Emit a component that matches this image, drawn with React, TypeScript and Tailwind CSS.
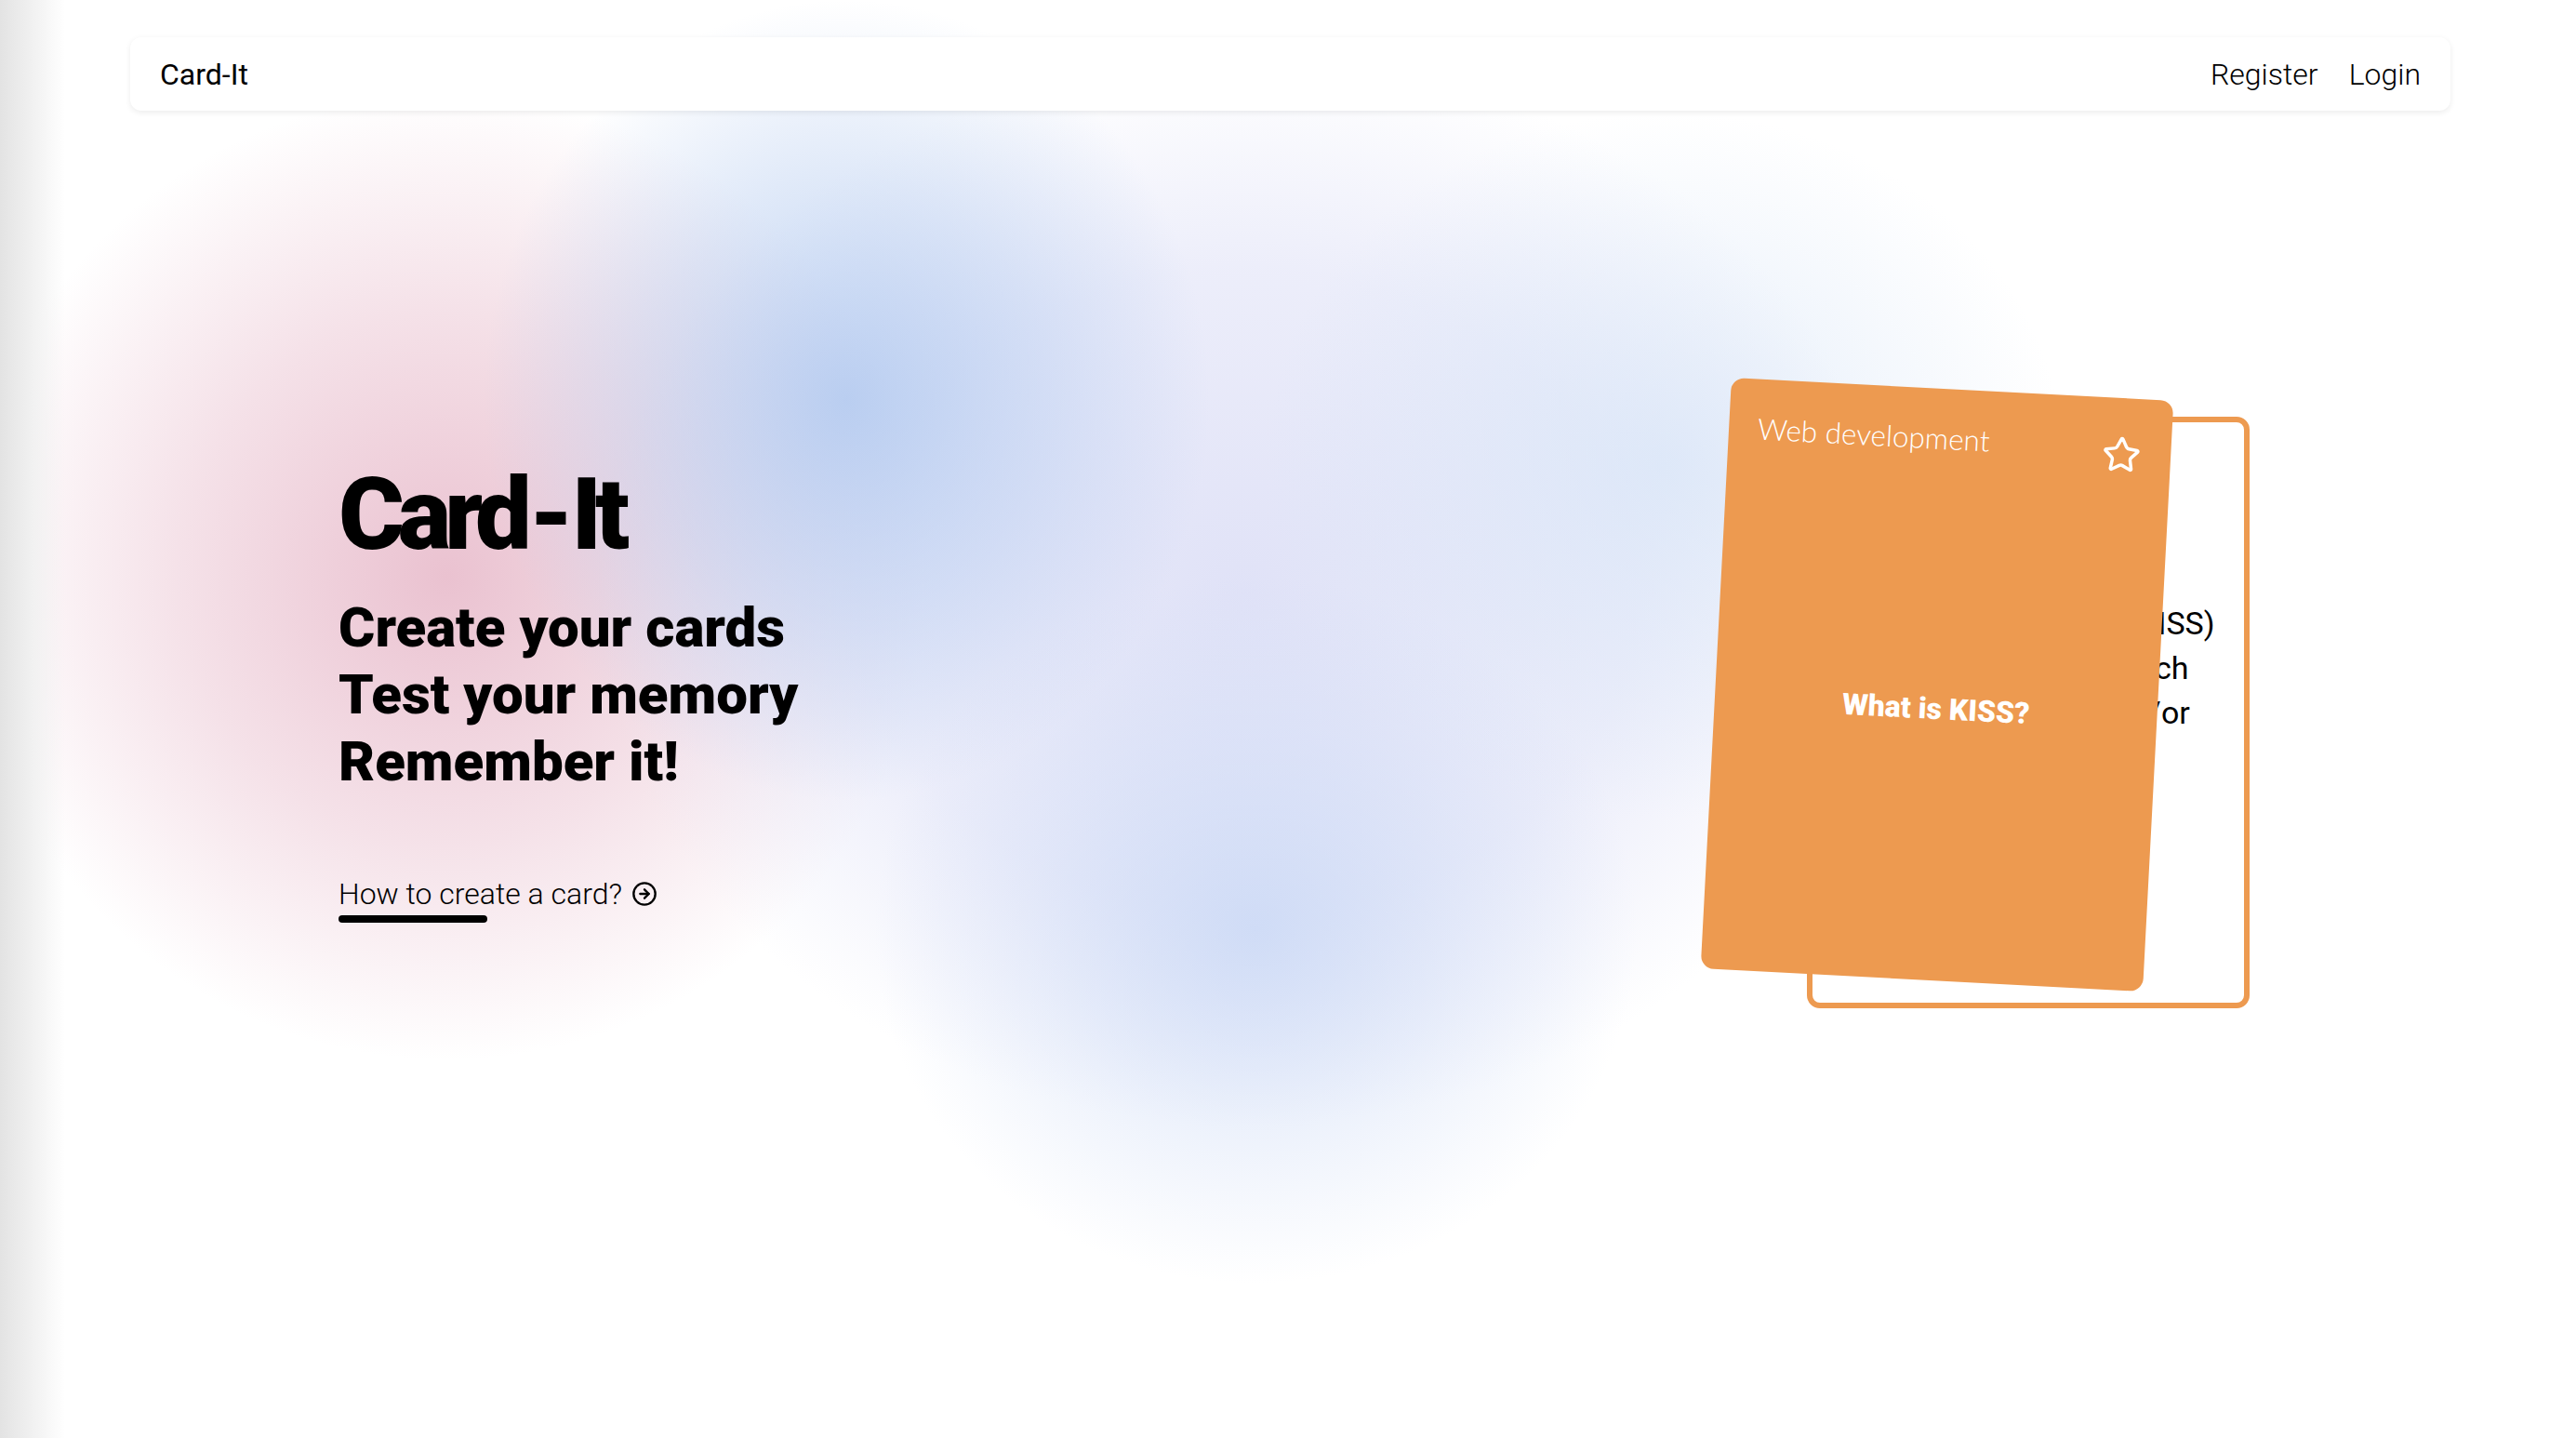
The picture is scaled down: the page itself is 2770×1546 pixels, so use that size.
import { CircleArrowRight, Star } from 'lucide-react'

const orange = 'bg-[#ed9a50]'

function Blobs() {
  return (
    <div className="pointer-events-none absolute inset-0">
      <div className="absolute left-[-40px] top-[100px] h-[1040px] w-[1040px] rounded-full bg-[radial-gradient(closest-side,rgba(226,170,190,0.72),rgba(226,170,190,0.35)_55%,rgba(226,170,190,0))]" />
      <div className="absolute left-[640px] top-[60px] h-[1150px] w-[1400px] rounded-full bg-[radial-gradient(closest-side,rgba(224,226,247,1),rgba(224,226,247,0.6)_60%,rgba(224,226,247,0))]" />
      <div className="absolute left-[520px] top-[0px] h-[860px] w-[780px] rounded-full bg-[radial-gradient(closest-side,rgba(176,200,239,0.85),rgba(176,200,239,0.4)_55%,rgba(176,200,239,0))]" />
      <div className="absolute left-[940px] top-[620px] h-[760px] w-[820px] rounded-full bg-[radial-gradient(closest-side,rgba(200,215,245,0.8),rgba(200,215,245,0.3)_60%,rgba(200,215,245,0))]" />
      <div className="absolute left-[1360px] top-[120px] h-[760px] w-[860px] rounded-full bg-[radial-gradient(closest-side,rgba(214,228,247,0.7),rgba(214,228,247,0))]" />
      <div className="absolute left-0 top-0 h-full w-[70px] bg-gradient-to-r from-[#e3e3e3] via-[#f1f1f1] to-transparent" />
    </div>
  )
}

function CardStack() {
  return (
    <div className="relative h-[636px] w-[476px]">
      <div className="flex h-full w-full items-center justify-center rounded-[14px] border-[6px] border-[#ed9a50] bg-white pr-[24px]">
        <p className="text-left font-['Roboto',sans-serif] text-[34px] leading-[48px] text-black">
          <span className="block">Keep it simple, stupid (KISS)</span>
          <span className="block">is a design principle which</span>
          <span className="block">states that designs and/or</span>
          <span className="block">systems should be as</span>
          <span className="block">simple as possible.</span>
        </p>
      </div>

      <div
        className={`absolute inset-0 flex translate-x-[-98px] translate-y-[-30px] rotate-[3deg] flex-col rounded-[14px] pb-[30px] ${orange}`}
      >
        <div className="flex items-start justify-between pl-[31px] pr-[32px] pt-[32px]">
          <span className="font-['Lato',sans-serif] text-[31.5px] font-light leading-[42px] text-white">
            Web development
          </span>
          <Star size={42} strokeWidth={2} className="mt-[8px] text-white" />
        </div>
        <div className="flex flex-1 items-center justify-center">
          <span className="font-['Roboto',sans-serif] text-[32px] font-black text-white">What is KISS?</span>
        </div>
      </div>
    </div>
  )
}

export default function App() {
  return (
    <div className="relative min-h-screen w-full overflow-hidden bg-white font-['Roboto',sans-serif] text-black">
      <Blobs />

      <div className="relative">
        <header className="pl-[140px] pr-[135px] pt-[40px]">
          <nav className="flex h-[79px] items-center justify-between rounded-[12px] bg-white px-[32px] shadow-[0_2px_6px_rgba(0,0,0,0.08)]">
            <a href="#" className="text-[32px] leading-none">
              Card-It
            </a>
            <div className="flex items-center gap-[33px] text-[32px] font-light leading-none">
              <a href="#">Register</a>
              <a href="#">Login</a>
            </div>
          </nav>
        </header>

        <main className="flex items-start justify-between pl-[364px] pr-[351px]">
          <section className="mt-[380px]">
            <h1 className="text-[108px] font-black leading-none tracking-[-0.065em]">
              Card<span className="mx-[4px]">-</span>It
            </h1>
            <h2 className="mt-[32px] text-[60px] font-black leading-[72px]">
              <span className="block">Create your cards</span>
              <span className="block">Test your memory</span>
              <span className="block">Remember it!</span>
            </h2>
            <a href="#" className="mt-[86px] flex items-center gap-[10px] text-[32px] font-light leading-[40px]">
              How to create a card?
              <CircleArrowRight size={28} strokeWidth={2} />
            </a>
            <div className="mt-[3px] h-[8px] w-[160px] rounded-full bg-black" />
          </section>

          <section className="mt-[329px]">
            <CardStack />
          </section>
        </main>
      </div>
    </div>
  )
}
